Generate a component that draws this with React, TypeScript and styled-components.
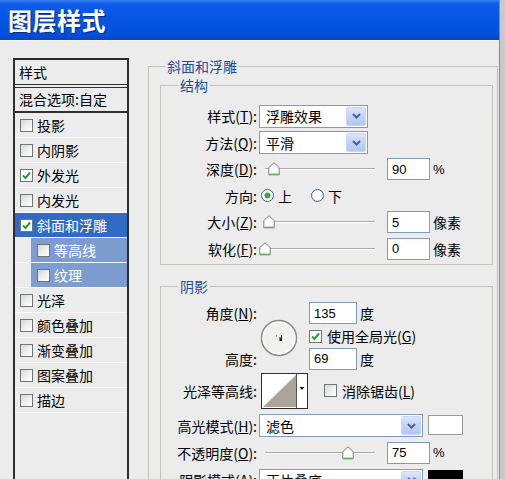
import React from 'react';
import styled, { createGlobalStyle } from 'styled-components';

const GlobalStyle = createGlobalStyle`
  html, body {
    margin: 0;
    padding: 0;
    background: #c9c9c9;
  }
  body {
    font-family: "Noto Sans CJK SC", "Noto Sans", sans-serif;
    font-size: 14px;
    color: #000;
    overflow: hidden;
  }
`;

const Window = styled.div`
  width: 499px;
  height: 479px;
  overflow: hidden;
  background: #ececec;
  border-right: 1px solid #8a8a8a;
  display: flex;
  flex-direction: column;
`;

const TitleBar = styled.div`
  flex: none;
  height: 40px;
  display: flex;
  align-items: center;
  padding-left: 8px;
  background: linear-gradient(
    to bottom,
    #3b80f2 0%,
    #0c5ce8 10%,
    #0656e3 45%,
    #0250dc 85%,
    #0a45c6 100%
  );
  border-bottom: 1px solid #f4f6fa;
`;

const Title = styled.div`
  color: #fff;
  font-size: 24px;
  font-weight: 700;
  letter-spacing: 0.5px;
  line-height: 28px;
  text-shadow: 1px 1px 1px #0b2a86;
`;

const Body = styled.div`
  flex: 1;
  display: flex;
  gap: 19px;
  padding: 17px 0 0 13px;
  min-height: 0;
`;

/* ---------- left list ---------- */

const StyleList = styled.div`
  flex: none;
  width: 116px;
  box-sizing: border-box;
  border: 2px solid #2e2e2e;
  border-bottom: none;
  background: #ececec;
  display: flex;
  flex-direction: column;
`;

const ListHeader = styled.div`
  height: 24px;
  line-height: 24px;
  padding-left: 4px;
  border-bottom: 4px double #303030;
`;

const BlendRow = styled.div`
  height: 23px;
  line-height: 23px;
  padding-left: 4px;
  border-bottom: 2px solid #303030;
`;

const ItemRow = styled.div<{ $variant?: 'selected' | 'sub' }>`
  height: 24px;
  display: flex;
  align-items: center;
  gap: 4px;
  padding-left: ${(p) => (p.$variant === 'sub' ? 22 : 5)}px;
  border-bottom: 1px solid #fafafa;
  color: ${(p) => (p.$variant ? '#fff' : '#000')};
  background: ${(p) =>
    p.$variant === 'selected'
      ? '#316ac5'
      : p.$variant === 'sub'
      ? 'linear-gradient(to right, transparent 16px, #7d9dd1 16px)'
      : 'transparent'};
`;

const Box = styled.span<{ $white?: boolean }>`
  flex: none;
  width: 13px;
  height: 13px;
  box-sizing: border-box;
  border: 1px solid #6f7478;
  background: ${(p) =>
    p.$white ? '#fff' : 'linear-gradient(135deg, #d8d8d2 0%, #f2f2ef 60%, #fff 100%)'};
  display: flex;
  align-items: center;
  justify-content: center;
`;

const Check: React.FC<{ checked?: boolean; white?: boolean }> = ({ checked, white }) => (
  <Box $white={white || checked}>
    {checked && (
      <svg width="9" height="9" viewBox="0 0 9 9">
        <polyline points="1,4.5 3.5,7 8,1.5" fill="none" stroke="#21a121" strokeWidth="2" />
      </svg>
    )}
  </Box>
);

/* ---------- right panel ---------- */

const Main = styled.div`
  flex: none;
  width: 350px;
`;

const Group = styled.fieldset<{ $outer?: boolean; $gap?: number }>`
  margin: ${(p) => p.$gap || 0}px 0 0 0;
  min-width: 0;
  border: 1px solid #c2c2ba;
  padding: ${(p) => (p.$outer ? '0 4px 30px 11px' : '0 0 2px 0')};
`;

const Legend = styled.legend<{ $offset: number }>`
  margin-left: ${(p) => p.$offset}px;
  padding: 0 2px;
  line-height: 16px;
  font-size: 14px;
  color: #1d4f99;
`;

const Rows = styled.div<{ $top: number }>`
  padding-top: ${(p) => p.$top}px;
  display: flex;
  flex-direction: column;
`;

const Row = styled.div<{ $h: number }>`
  height: ${(p) => p.$h}px;
  display: grid;
  grid-template-columns: 96px 1fr;
  column-gap: 2px;
  align-items: center;
`;

const Label = styled.span`
  text-align: right;
  white-space: nowrap;
  line-height: 18px;
`;

const Key = styled.span`
  text-decoration: underline;
  text-underline-offset: 1px;
`;

const Controls = styled.div`
  display: flex;
  align-items: center;
`;

const SelectBox = styled.div<{ $w: number }>`
  width: ${(p) => p.$w}px;
  height: 23px;
  box-sizing: border-box;
  border: 1px solid #7f9db9;
  background: #fff;
  display: flex;
  align-items: center;
  padding-left: 6px;
  line-height: 18px;
`;

const DropButton = styled.span`
  margin-left: auto;
  margin-right: 1px;
  width: 20px;
  height: 19px;
  box-sizing: border-box;
  border: 1px solid #c6d5fa;
  border-radius: 2px;
  background: linear-gradient(to bottom, #dbe5fd 0%, #c1d3fb 50%, #b2c7f5 100%);
  display: flex;
  align-items: center;
  justify-content: center;
`;

const Select: React.FC<{ value: string; width: number }> = ({ value, width }) => (
  <SelectBox $w={width}>
    {value}
    <DropButton>
      <svg width="9" height="6" viewBox="0 0 9 6">
        <polyline points="1,1 4.5,4.5 8,1" fill="none" stroke="#4d6185" strokeWidth="2" />
      </svg>
    </DropButton>
  </SelectBox>
);

const NumField = styled.input`
  width: 43px;
  height: 22px;
  box-sizing: border-box;
  border: 1px solid #7f9db9;
  background: #fff;
  margin: 0;
  padding: 0 0 0 4px;
  font-family: "Liberation Sans", Arial, sans-serif;
  font-size: 13px;
  color: #000;
  outline: none;
`;

const Unit = styled.span<{ $latin?: boolean }>`
  margin-left: 3px;
  font-family: ${(p) =>
    p.$latin ? '"Liberation Sans", Arial, sans-serif' : '"Noto Sans CJK SC", sans-serif'};
  font-size: ${(p) => (p.$latin ? 13 : 14)}px;
`;

const SliderWrap = styled.div`
  position: relative;
  width: 120px;
  height: 20px;
  margin-right: 8px;
`;

const Track = styled.div`
  position: absolute;
  left: 6px;
  right: 4px;
  top: 9px;
  height: 0;
  border-top: 1px solid #a9a9a9;
  border-bottom: 1px solid #fff;
`;

const Thumb = styled.svg<{ $pos: number }>`
  position: absolute;
  top: 3px;
  left: calc(6px + ${(p) => p.$pos} * 108px - 6px);
`;

const Slider: React.FC<{ pos: number }> = ({ pos }) => (
  <SliderWrap>
    <Track />
    <Thumb $pos={pos} width="12" height="14" viewBox="0 0 12 14">
      <path d="M6 0.8 L11.2 5.6 V12.8 H0.8 V5.6 Z" fill="#fff" stroke="#7d7d7d" />
      <line x1="1.5" y1="12.3" x2="10.5" y2="12.3" stroke="#5cb85c" strokeWidth="1.5" />
    </Thumb>
  </SliderWrap>
);

const Radio = styled.span<{ $on?: boolean }>`
  flex: none;
  width: 13px;
  height: 13px;
  box-sizing: border-box;
  border-radius: 50%;
  border: 1px solid #3d6185;
  background: ${(p) =>
    p.$on
      ? 'radial-gradient(circle, #2fb12f 0 2.5px, #a8dca8 3px, #fff 3.6px)'
      : 'radial-gradient(circle, #fff 0 3px, #e4e4de 100%)'};
`;

const RadioText = styled.span<{ $gap?: number }>`
  margin-left: 4px;
  margin-right: ${(p) => p.$gap || 0}px;
`;

const AngleGrid = styled.div`
  display: grid;
  grid-template-columns: 96px 48px auto;
  grid-template-rows: 24px 22px 23px;
  column-gap: 2px;
  align-items: center;
`;

const Dial = styled.svg`
  grid-column: 2;
  grid-row: 1 / 4;
  margin: 5px 0 0 1px;
`;

const Inline = styled.div`
  display: flex;
  align-items: center;
  gap: 5px;
  line-height: 18px;
`;

const Contour = styled.svg`
  margin-left: 2px;
  margin-right: 16px;
`;

const Swatch = styled.span<{ $color: string }>`
  width: 35px;
  height: 20px;
  box-sizing: border-box;
  margin-left: 5px;
  border: 1px solid ${(p) => (p.$color === '#000' ? '#000' : '#9a9a9a')};
  background: ${(p) => p.$color};
  align-self: flex-start;
  margin-top: 1px;
`;

const items: { name: string; checked?: boolean; variant?: 'selected' | 'sub' }[] = [
  { name: '投影' },
  { name: '内阴影' },
  { name: '外发光', checked: true },
  { name: '内发光' },
  { name: '斜面和浮雕', checked: true, variant: 'selected' },
  { name: '等高线', variant: 'sub' },
  { name: '纹理', variant: 'sub' },
  { name: '光泽' },
  { name: '颜色叠加' },
  { name: '渐变叠加' },
  { name: '图案叠加' },
  { name: '描边' },
];

const App: React.FC = () => {
  return (
    <>
      <GlobalStyle />
      <Window>
        <TitleBar>
          <Title>图层样式</Title>
        </TitleBar>
        <Body>
          <StyleList>
            <ListHeader>样式</ListHeader>
            <BlendRow>混合选项:自定</BlendRow>
            {items.map((item) => (
              <ItemRow key={item.name} $variant={item.variant}>
                <Check checked={item.checked} white={item.variant === 'selected'} />
                {item.name}
              </ItemRow>
            ))}
          </StyleList>

          <Main>
            <Group $outer>
              <Legend $offset={5}>斜面和浮雕</Legend>
              <Group $gap={3}>
                <Legend $offset={17}>结构</Legend>
                <Rows $top={10}>
                  <Row $h={26.5}>
                    <Label>
                      样式(<Key>T</Key>):
                    </Label>
                    <Controls>
                      <Select value="浮雕效果" width={109} />
                    </Controls>
                  </Row>
                  <Row $h={26.5}>
                    <Label>
                      方法(<Key>Q</Key>):
                    </Label>
                    <Controls>
                      <Select value="平滑" width={109} />
                    </Controls>
                  </Row>
                  <Row $h={26.5}>
                    <Label>
                      深度(<Key>D</Key>):
                    </Label>
                    <Controls>
                      <Slider pos={0.08} />
                      <NumField readOnly value="90" />
                      <Unit $latin>%</Unit>
                    </Controls>
                  </Row>
                  <Row $h={26.5}>
                    <Label>方向:</Label>
                    <Controls>
                      <Radio $on style={{ marginLeft: 2 }} />
                      <RadioText $gap={19}>上</RadioText>
                      <Radio />
                      <RadioText>下</RadioText>
                    </Controls>
                  </Row>
                  <Row $h={26.5}>
                    <Label>
                      大小(<Key>Z</Key>):
                    </Label>
                    <Controls>
                      <Slider pos={0.04} />
                      <NumField readOnly value="5" />
                      <Unit>像素</Unit>
                    </Controls>
                  </Row>
                  <Row $h={26.5}>
                    <Label>
                      软化(<Key>F</Key>):
                    </Label>
                    <Controls>
                      <Slider pos={0} />
                      <NumField readOnly value="0" />
                      <Unit>像素</Unit>
                    </Controls>
                  </Row>
                </Rows>
              </Group>

              <Group $gap={13}>
                <Legend $offset={17}>阴影</Legend>
                <Rows $top={7}>
                  <AngleGrid>
                    <Label style={{ gridColumn: 1, gridRow: 1 }}>
                      角度(<Key>N</Key>):
                    </Label>
                    <Dial width="38" height="38" viewBox="0 0 38 38">
                      <circle cx="19" cy="19" r="17.5" fill="#f1f1ef" stroke="#8b8b8b" strokeWidth="1.5" />
                      <circle cx="19" cy="19" r="16" fill="none" stroke="#fff" strokeWidth="1" />
                      <line x1="16" y1="17" x2="17" y2="17" stroke="#333" />
                      <line x1="19" y1="19" x2="22" y2="19" stroke="#222" strokeWidth="1" />
                      <line x1="21.5" y1="16" x2="21.5" y2="19.5" stroke="#222" strokeWidth="1" />
                      <rect x="19.5" y="19.5" width="2.5" height="2.5" fill="#111" />
                    </Dial>
                    <Controls style={{ gridColumn: 3, gridRow: 1 }}>
                      <NumField readOnly value="135" style={{ width: 48 }} />
                      <Unit>度</Unit>
                    </Controls>
                    <Inline style={{ gridColumn: 3, gridRow: 2 }}>
                      <Check checked />
                      <span>
                        使用全局光(<Key>G</Key>)
                      </span>
                    </Inline>
                    <Label style={{ gridColumn: 1, gridRow: 3 }}>高度:</Label>
                    <Controls style={{ gridColumn: 3, gridRow: 3 }}>
                      <NumField readOnly value="69" style={{ width: 48 }} />
                      <Unit>度</Unit>
                    </Controls>
                  </AngleGrid>

                  <Row $h={41}>
                    <Label>光泽等高线:</Label>
                    <Controls>
                      <Contour width="47" height="36" viewBox="0 0 47 36">
                        <rect x="0.5" y="0.5" width="46" height="35" fill="#fff" stroke="#2d2d2d" />
                        <polygon points="2,34 35,2 35,34" fill="#aba498" />
                        <line x1="35.5" y1="1" x2="35.5" y2="35" stroke="#555" />
                        <polygon points="38.5,14 43.5,14 41,17" fill="#111" />
                      </Contour>
                      <Inline>
                        <Check />
                        <span>
                          消除锯齿(<Key>L</Key>)
                        </span>
                      </Inline>
                    </Controls>
                  </Row>

                  <Row $h={29}>
                    <Label>
                      高光模式(<Key>H</Key>):
                    </Label>
                    <Controls>
                      <Select value="滤色" width={164} />
                      <Swatch $color="#fff" />
                    </Controls>
                  </Row>

                  <Row $h={25}>
                    <Label>
                      不透明度(<Key>O</Key>):
                    </Label>
                    <Controls>
                      <Slider pos={0.77} />
                      <NumField readOnly value="75" />
                      <Unit $latin>%</Unit>
                    </Controls>
                  </Row>

                  <Row $h={30}>
                    <Label>
                      阴影模式(<Key>A</Key>):
                    </Label>
                    <Controls>
                      <Select value="正片叠底" width={164} />
                      <Swatch $color="#000" />
                    </Controls>
                  </Row>
                </Rows>
              </Group>
            </Group>
          </Main>
        </Body>
      </Window>
    </>
  );
};

export default App;
